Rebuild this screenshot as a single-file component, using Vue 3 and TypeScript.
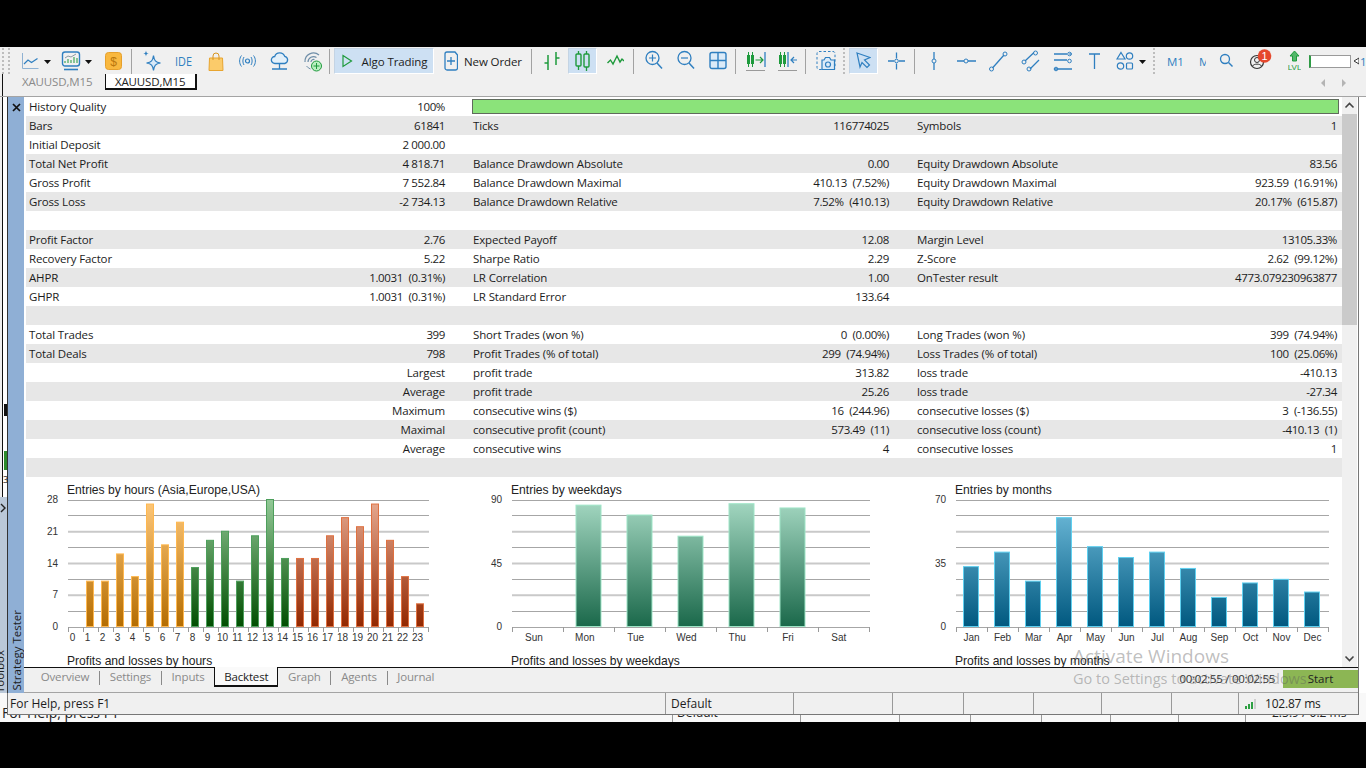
<template>
  <div class="screen">
    <div class="letterbox"></div>
    <div class="window">
      <!-- main toolbar -->
      <div class="toolbar">
        <template v-for="(t, i) in placedTools" :key="i">
          <span v-if="t.kind === 'sep'" class="sep" :style="{ marginLeft: t.gap + 'px' }"></span>
          <span v-else-if="t.kind === 'grip'" class="grip" :style="{ marginLeft: t.gap + 'px' }"></span>
          <span v-else-if="t.kind === 'text'" class="tool-text" :class="t.cls" :style="{ marginLeft: t.gap + 'px', width: t.w + 'px' }">{{ t.label }}</span>
          <span v-else-if="t.kind === 'active'" class="active-btn" :style="{ marginLeft: t.gap + 'px', width: t.w + 'px' }">
            <svg :width="t.iw" height="22" :viewBox="`0 0 ${t.iw} 22`" fill="none" v-html="t.body"></svg>
            <span v-if="t.label" class="active-label">{{ t.label }}</span>
          </span>
          <svg
            v-else
            class="tool-icon"
            :style="{ marginLeft: t.gap + 'px' }"
            :width="t.w"
            height="24"
            :viewBox="`0 0 ${t.w} 24`"
            fill="none"
            v-html="t.body"
          ></svg>
        </template>
      </div>

      <!-- chart tabs -->
      <div class="chart-tabs">
        <span class="tab-edge"></span>
        <span class="chart-tab">XAUUSD,M15</span>
        <span class="chart-tab current">XAUUSD,M15</span>
        <span class="tab-arrows"><i class="arr-left"></i><i class="arr-right"></i></span>
      </div>

      <div class="work">
        <div class="sliver">
          <div class="sliver-top">
            <i class="blob-dark"></i>
            <i class="blob-green"></i>
            <span class="sliver-num">3</span>
          </div>
          <div class="sliver-bottom">
            <svg width="7" height="10" viewBox="0 0 7 10" fill="none"><path d="M1 1l4 4-4 4" stroke="#222" stroke-width="1.4" /></svg>
            <span class="toolbox">Toolbox</span>
          </div>
        </div>

        <div class="strip">
          <svg class="close" width="9" height="9" viewBox="0 0 9 9"><path d="M1 1l7 7M8 1L1 8" stroke="#111" stroke-width="1.7" /></svg>
          <span class="strip-title">Strategy Tester</span>
        </div>

        <div class="center">
          <div class="report-wrap">
            <div class="report">
              <div class="row">
                <div class="cell"><span>History Quality</span><span class="num">100%</span></div>
                <div class="quality"></div>
              </div>
              <div v-for="(r, i) in rows" :key="i" class="row" :class="{ shade: i % 2 === 0 }">
                <div class="cell"><span>{{ r[0] }}</span><span :class="valueClass(r[1])">{{ r[1] }}</span></div>
                <div class="cell"><span>{{ r[2] }}</span><span :class="valueClass(r[3])">{{ r[3] }}</span></div>
                <div class="cell"><span>{{ r[4] }}</span><span :class="valueClass(r[5])">{{ r[5] }}</span></div>
              </div>
              <div class="charts">
                <svg v-for="c in charts" :key="c.id" width="444" height="190" viewBox="0 0 444 190" class="chart">
                  <defs>
                    <linearGradient v-for="g in c.grads" :id="g.id" :key="g.id" gradientUnits="userSpaceOnUse" x1="0" y1="22" x2="0" y2="150">
                      <stop offset="0" :stop-color="g.top" />
                      <stop offset="1" :stop-color="g.bottom" />
                    </linearGradient>
                  </defs>
                  <text x="42" y="17" class="title">{{ c.title }}</text>
                  <line
                    v-for="(g, k) in gridLines"
                    :key="k"
                    x1="43"
                    :x2="c.right"
                    :y1="g.y"
                    :y2="g.y"
                    :stroke="g.color"
                    :stroke-width="g.width"
                  />
                  <text v-for="(v, k) in c.axis" :key="k" x="33" :y="v.y" text-anchor="end" class="tick">{{ v.label }}</text>
                  <line v-for="(x, k) in c.ticks" :key="k" :x1="x" :x2="x" y1="150" y2="155" stroke="#9a9a9a" />
                  <rect
                    v-for="(b, k) in c.bars"
                    :key="k"
                    :x="b.x + 0.5"
                    :y="b.y"
                    :width="c.barW - 1"
                    :height="b.h"
                    :fill="`url(#${b.grad})`"
                    :stroke="b.stroke"
                  />
                  <text v-for="(l, k) in c.labels" :key="k" :x="l.x" y="164" text-anchor="middle" class="tick">{{ l.text }}</text>
                  <text x="42" y="188" class="title">{{ c.sub }}</text>
                </svg>
              </div>
            </div>
            <div class="scrollbar">
              <div class="sb-btn"><svg width="11" height="7" viewBox="0 0 11 7" fill="none"><path d="M1.5 5.5l4-4 4 4" stroke="#444" stroke-width="1.6" /></svg></div>
              <div class="sb-thumb"></div>
              <div class="sb-rest"></div>
              <div class="sb-btn"><svg width="11" height="7" viewBox="0 0 11 7" fill="none"><path d="M1.5 1.5l4 4 4-4" stroke="#444" stroke-width="1.6" /></svg></div>
            </div>
          </div>

          <div class="tester-tabs">
            <span class="ttab">Overview</span><i class="tdiv"></i>
            <span class="ttab">Settings</span><i class="tdiv"></i>
            <span class="ttab">Inputs</span>
            <span class="ttab current">Backtest</span>
            <span class="ttab">Graph</span><i class="tdiv"></i>
            <span class="ttab">Agents</span><i class="tdiv"></i>
            <span class="ttab">Journal</span>
            <span class="timer">00:02:55 / 00:02:55</span>
            <button class="start">Start</button>
          </div>
        </div>

        <div class="edge"></div>
      </div>

      <div class="foot">
        <div class="ghost">
          <span class="ghost-help">For Help, press F1</span>
          <span class="ghost-default">Default</span>
          <span class="ghost-ping">2.5.9 / 0.2 ms</span>
          <i v-for="x in ghostDividers" :key="x" class="ghost-div" :style="{ left: x + 'px' }"></i>
        </div>
        <div class="status">
          <span class="st help">For Help, press F1</span>
          <span class="st w128">Default</span>
          <span class="st w99"></span>
          <span class="st w71"></span>
          <span class="st w70"></span>
          <span class="st w68"></span>
          <span class="st w70"></span>
          <span class="st w67"></span>
          <span class="st ping">
            <svg width="13" height="11" viewBox="0 0 13 11"><path d="M1 8h2v3H1zM4 6h2v5H4zM7 4h2v7H7z" fill="#2ea043" /><path d="M10 1h2v10h-2z" fill="#cfcfcf" /></svg>
            102.87 ms
          </span>
        </div>
      </div>
    </div>
    <div class="letterbox low"></div>

    <div class="watermark">
      <div class="wm-big">Activate Windows</div>
      <div class="wm-small">Go to Settings to activate Windows.</div>
    </div>
  </div>
</template>

<script setup lang="ts">
interface Tool {
  x: number
  w: number
  kind?: 'sep' | 'grip' | 'text' | 'active'
  body?: string
  label?: string
  cls?: string
  iw?: number
}

const B = '#2f7fc0'
const G = '#1e9a3c'
const DROP = `<path d="M0 11h7l-3.500 4z" fill="#111"/>`

const sep = (x: number): Tool => ({ x, w: 1, kind: 'sep' })

const tools: Tool[] = [
  { x: 2, w: 2, kind: 'grip' },
  { x: 8, w: 2, kind: 'grip' },
  { x: 21, w: 18, body: `<path d="M1.500 4v15.500h16" stroke="#8fb2d3"/><path d="M3 15l4-4 3.500 2.500 6-4" stroke="${B}" stroke-width="1.2"/>` },
  { x: 44, w: 7, body: DROP },
  { x: 61, w: 20, body: `<rect x="1.500" y="3" width="17" height="14" rx="2.500" stroke="${B}" stroke-width="1.4"/><path d="M4 14v-2M7 14v-4M10 14v-3M13 14V8M16 14V9" stroke="${G}"/><path d="M4 9l3-2 3 1 5-3" stroke="#8a9aa5"/><path d="M3 20.500h14" stroke="${B}" stroke-width="1.6"/>` },
  { x: 85, w: 7, body: DROP },
  { x: 105, w: 17, body: `<rect x=".5" y="3.500" width="16" height="17" rx="3" fill="#f9b83f" stroke="#e6a02c"/><text x="8.500" y="16.500" text-anchor="middle" font-family="Liberation Sans, sans-serif" font-size="12" fill="#b9770e">$</text>` },
  sep(131),
  { x: 142, w: 19, body: `<path d="M11.500 6.500c.7 5 2 6.800 7 7.500-5 .7-6.300 2.500-7 7.500-.7-5-2-6.800-7-7.500 5-.7 6.300-2.500 7-7.500z" fill="#d8e9f8" stroke="${B}" stroke-width="1.2"/><path d="M4 1.500c.3 2 .8 2.700 2.800 3-2 .3-2.500 1-2.800 3-.3-2-.8-2.700-2.800-3 2-.3 2.500-1 2.800-3z" fill="${B}"/>` },
  { x: 175, w: 18, body: `<text x="0" y="17" font-family="Open Sans, sans-serif" font-size="12" fill="${B}" textLength="17" lengthAdjust="spacingAndGlyphs">IDE</text>` },
  { x: 208, w: 16, body: `<path d="M1.500 9h13l.5 12.500H1z" fill="#fbcb6a" stroke="#e8a530"/><path d="M5 11V7a3 3 0 0 1 6 0v4" stroke="#d8951f"/>` },
  { x: 239, w: 17, body: `<circle cx="8.500" cy="12" r="2" stroke="${B}" stroke-width="1.2"/><path d="M5 8c-1.500 2-1.500 6 0 8M12 8c1.500 2 1.500 6 0 8M2.500 6.500c-2.500 3-2.500 8 0 11M14.500 6.500c2.500 3 2.500 8 0 11" stroke="${B}"/>` },
  { x: 270, w: 19, body: `<path d="M5 14.500a3.500 3.500 0 0 1-.3-7 5.300 5.300 0 0 1 10-.2 3.700 3.700 0 0 1 .1 7.200z" fill="#e3f0fa" stroke="${B}" stroke-width="1.3"/><path d="M9.500 14.500v5M2 20h15" stroke="${B}" stroke-width="1.3"/>` },
  { x: 303, w: 19, body: `<path d="M2 13a8.500 8.500 0 0 1 14-7M5 13a5.500 5.500 0 0 1 8.500-4.500M8 13a2.700 2.700 0 0 1 3.500-2.500" stroke="#6f8ea8" stroke-width="1.2"/><path d="M3.500 17a9 9 0 0 0 4 3" stroke="#6f8ea8"/><circle cx="13.500" cy="17" r="5" fill="#b8efc0" stroke="${G}"/><path d="M13.500 14v6M10.500 17h6" stroke="${G}"/>` },
  sep(329),
  { x: 334, w: 100, kind: 'active', label: 'Algo Trading', iw: 12, body: `<path d="M2 5.500l8.500 5.500L2 16.500z" stroke="${G}" stroke-width="1.2"/>` },
  { x: 444, w: 14, body: `<path d="M3 3h8l2.500 3v13a2 2 0 0 1-2 2H3a2 2 0 0 1-2-2V5a2 2 0 0 1 2-2z" stroke="${B}" stroke-width="1.3"/><path d="M7 8v8M3 12h8" stroke="${B}" stroke-width="1.3"/>` },
  { x: 464, w: 60, kind: 'text', label: 'New Order' },
  sep(531),
  { x: 543, w: 17, body: `<path d="M5 6v15M1.500 14H5M13 3v13M13 9h3.500" stroke="${G}" stroke-width="1.5"/>` },
  { x: 568, w: 29, kind: 'active', iw: 15, body: `<path d="M3.500 1v3M3.500 16v4M11.500 1v3M11.500 17v4" stroke="${G}" stroke-width="1.3"/><rect x="1" y="4" width="5" height="12" rx="1" stroke="${G}" stroke-width="1.4"/><rect x="9" y="4" width="5" height="13" rx="1" stroke="${G}" stroke-width="1.4"/>` },
  { x: 607, w: 17, body: `<path d="M.5 14l3-3 2.500 4 4-8 3 6 2-3 2 2" stroke="${G}" stroke-width="1.4"/>` },
  sep(633),
  { x: 645, w: 18, body: `<circle cx="7.500" cy="9" r="6.500" stroke="${B}" stroke-width="1.3"/><path d="M12 14l5 5.500" stroke="${B}" stroke-width="1.5"/><path d="M7.500 5.500v7M4 9h7" stroke="${B}" stroke-width="1.2"/>` },
  { x: 677, w: 18, body: `<circle cx="7.500" cy="9" r="6.500" stroke="${B}" stroke-width="1.3"/><path d="M12 14l5 5.500" stroke="${B}" stroke-width="1.5"/><path d="M4 9h7" stroke="${B}" stroke-width="1.2"/>` },
  { x: 709, w: 18, body: `<rect x="1" y="3.500" width="16" height="16" rx="2" fill="#dcebf8" stroke="${B}" stroke-width="1.4"/><path d="M9 3.500v16M1 11.500h16" stroke="${B}" stroke-width="1.4"/>` },
  sep(735),
  { x: 746, w: 20, body: `<path d="M2.500 3v15M6.500 3v15" stroke="${G}"/><rect x="1" y="6" width="3" height="9" fill="${G}"/><rect x="5" y="6" width="3" height="9" fill="${G}"/><path d="M9.500 11h7M14 8l3 3-3 3" stroke="${G}" stroke-width="1.2"/><path d="M19 3v15" stroke="${B}" stroke-width="1.3"/><path d="M0 21.500h19" stroke="#9a9a9a"/>` },
  { x: 778, w: 20, body: `<path d="M2.500 3v15M6.500 3v15" stroke="${G}"/><rect x="1" y="6" width="3" height="9" fill="${G}"/><rect x="5" y="6" width="3" height="9" fill="${G}"/><path d="M10 3v15" stroke="${B}" stroke-width="1.3"/><path d="M19 11h-6M16 8l-3 3 3 3" stroke="${B}" stroke-width="1.2"/><path d="M0 21.500h19" stroke="#9a9a9a"/>` },
  sep(805),
  { x: 816, w: 20, body: `<rect x="1" y="2.500" width="18" height="18" rx="2" stroke="${B}" stroke-dasharray="2.500 2"/><path d="M6 11h2l1.500-2.500h4L15 11h3.500v9.500H6z" fill="#dcebf8" stroke="${B}" stroke-width="1.2"/><circle cx="12" cy="15.500" r="2.500" stroke="${B}" stroke-width="1.2"/>` },
  { x: 843, w: 2, kind: 'grip' },
  { x: 849, w: 29, kind: 'active', iw: 15, body: `<path d="M1 3l13 4.500-5.500 2.500 5 5-2.500 2.500-5-5L4 17z" stroke="${B}" stroke-width="1.2"/>` },
  { x: 888, w: 17, body: `<path d="M8.500 3.500v6M8.500 14.500v6M0 12h6M11 12h6" stroke="${B}" stroke-width="1.3"/><circle cx="8.500" cy="12" r="1.800" stroke="${B}"/>` },
  sep(914),
  { x: 929, w: 10, body: `<path d="M5 3v7M5 14v7" stroke="${B}" stroke-width="1.3"/><circle cx="5" cy="12" r="2" stroke="${B}"/>` },
  { x: 957, w: 19, body: `<path d="M0 12h7M11 12h8" stroke="${B}" stroke-width="1.3"/><circle cx="9" cy="12" r="2" stroke="${B}"/>` },
  { x: 988, w: 20, body: `<path d="M4.500 19L16 6" stroke="${B}" stroke-width="1.3"/><circle cx="3.500" cy="20" r="2" stroke="${B}"/><circle cx="17" cy="5" r="2" stroke="${B}"/>` },
  { x: 1021, w: 20, body: `<path d="M4 12l9-8.500M9 20l9-9" stroke="${B}" stroke-width="1.3"/><circle cx="3" cy="13" r="2" stroke="${B}"/><circle cx="14.500" cy="4" r="2" stroke="${B}"/><circle cx="8" cy="20" r="2" stroke="${B}"/>` },
  { x: 1053, w: 20, body: `<path d="M1 5h13M1 11h13M1 20h18" stroke="${B}" stroke-width="1.3"/><path d="M16 5h3" stroke="${B}"/><circle cx="16.500" cy="5" r="1.800" stroke="${B}"/><circle cx="16.500" cy="12" r="1.800" stroke="${B}"/><circle cx="3" cy="20" r="1.800" stroke="${B}"/>` },
  { x: 1088, w: 13, body: `<path d="M1 5h11M6.500 5v15" stroke="${B}" stroke-width="1.3"/>` },
  { x: 1116, w: 18, body: `<path d="M5 3.500l4 6.500H1z" stroke="${B}" stroke-width="1.2"/><circle cx="13.500" cy="7" r="3.200" stroke="${B}" stroke-width="1.2"/><circle cx="4.500" cy="17" r="3.200" stroke="${B}" stroke-width="1.2"/><rect x="10.500" y="14" width="6" height="6" rx="1" stroke="${B}" stroke-width="1.2"/>` },
  { x: 1139, w: 7, body: DROP },
  { x: 1153, w: 2, kind: 'grip' },
  { x: 1167, w: 20, kind: 'text', label: 'M1', cls: 'blue' },
  { x: 1199, w: 7, kind: 'text', label: 'M', cls: 'blue clip' },
  { x: 1219, w: 14, body: `<circle cx="6" cy="10" r="4.500" stroke="${B}" stroke-width="1.3"/><path d="M9.500 13.500l4 4" stroke="${B}" stroke-width="1.4"/>` },
  { x: 1249, w: 23, body: `<circle cx="8" cy="13" r="6.500" stroke="#333" stroke-width="1.2"/><circle cx="8" cy="11" r="2.500" stroke="#333"/><path d="M3.500 17c1.500-2.500 7.500-2.500 9 0" stroke="#333"/><circle cx="15.500" cy="7" r="6.800" fill="#e5482d"/><text x="15.500" y="11" text-anchor="middle" font-family="Liberation Sans, sans-serif" font-size="11" fill="#fff">1</text>` },
  { x: 1288, w: 13, body: `<path d="M6.500 2L11 7H8.500v5h-4V7H2z" fill="#53b76a" stroke="${G}"/><text x="6.500" y="21" text-anchor="middle" font-family="Liberation Sans, sans-serif" font-size="8" fill="${G}">LVL</text>` },
  { x: 1309, w: 42, kind: 'text', label: '', cls: 'vol' },
  { x: 1354, w: 5, body: `<path d="M5 9L0 12l5 3z" fill="#fff" stroke="#333"/>` },
  { x: 1360, w: 6, kind: 'text', label: '1', cls: 'blue' },
]

// turn the x positions into gaps for the flex row
let edge = 0
const placedTools = tools.map((t) => {
  const gap = t.x - edge
  edge = t.x + t.w
  return { ...t, gap }
})

// digits are narrower in the reference, and bracketed values have a wider space
const valueClass = (v: string) => ({ num: /^-?\d/.test(v), paren: v.includes('(') })

const ghostDividers = [670, 798, 897, 968, 1039, 1108, 1176, 1243]

const rows: string[][] = [
  ['Bars', '61841', 'Ticks', '116774025', 'Symbols', '1'],
  ['Initial Deposit', '2 000.00', '', '', '', ''],
  ['Total Net Profit', '4 818.71', 'Balance Drawdown Absolute', '0.00', 'Equity Drawdown Absolute', '83.56'],
  ['Gross Profit', '7 552.84', 'Balance Drawdown Maximal', '410.13 (7.52%)', 'Equity Drawdown Maximal', '923.59 (16.91%)'],
  ['Gross Loss', '-2 734.13', 'Balance Drawdown Relative', '7.52% (410.13)', 'Equity Drawdown Relative', '20.17% (615.87)'],
  ['', '', '', '', '', ''],
  ['Profit Factor', '2.76', 'Expected Payoff', '12.08', 'Margin Level', '13105.33%'],
  ['Recovery Factor', '5.22', 'Sharpe Ratio', '2.29', 'Z-Score', '2.62 (99.12%)'],
  ['AHPR', '1.0031 (0.31%)', 'LR Correlation', '1.00', 'OnTester result', '4773.079230963877'],
  ['GHPR', '1.0031 (0.31%)', 'LR Standard Error', '133.64', '', ''],
  ['', '', '', '', '', ''],
  ['Total Trades', '399', 'Short Trades (won %)', '0 (0.00%)', 'Long Trades (won %)', '399 (74.94%)'],
  ['Total Deals', '798', 'Profit Trades (% of total)', '299 (74.94%)', 'Loss Trades (% of total)', '100 (25.06%)'],
  ['', 'Largest', 'profit trade', '313.82', 'loss trade', '-410.13'],
  ['', 'Average', 'profit trade', '25.26', 'loss trade', '-27.34'],
  ['', 'Maximum', 'consecutive wins ($)', '16 (244.96)', 'consecutive losses ($)', '3 (-136.55)'],
  ['', 'Maximal', 'consecutive profit (count)', '573.49 (11)', 'consecutive loss (count)', '-410.13 (1)'],
  ['', 'Average', 'consecutive wins', '4', 'consecutive losses', '1'],
  ['', '', '', '', '', ''],
]

const TOP = 22.5
const BASE = 149.5
const STEP = (BASE - TOP) / 8

const gridLines = Array.from({ length: 9 }, (_, i) => {
  const edgeLine = i === 0 || i === 8
  const light = !edgeLine && i % 2 === 0
  return {
    y: light ? TOP + i * STEP + 0.5 : Math.round(TOP + i * STEP) + 0.5,
    color: light ? '#c9c9c9' : '#a6a6a6',
    width: light ? 2 : 1,
  }
})

interface Grad {
  id: string
  top: string
  bottom: string
  stroke: string
}

function makeChart(opts: {
  id: string
  title: string
  sub: string
  max: number
  parts: number
  right: number
  slot: number
  barOff: number
  barW: number
  labelStart: number
  labelStep: number
  names: string[]
  values: number[]
  grads: Grad[]
  gradOf: (i: number) => number
}) {
  const axis = Array.from({ length: opts.parts + 1 }, (_, i) => ({
    y: TOP + (i * (BASE - TOP)) / opts.parts + 3.5,
    label: String(Math.round((opts.max * (opts.parts - i)) / opts.parts)),
  }))
  const ticks = opts.names.map((_, i) => 43.5 + i * opts.slot)
  ticks.push(43.5 + opts.names.length * opts.slot)
  const bars = opts.values
    .map((v, i) => {
      const h = ((BASE - TOP) * v) / opts.max
      const g = opts.grads[opts.gradOf(i)]
      return { x: 43 + opts.barOff + i * opts.slot, y: BASE - h, h, grad: g.id, stroke: g.stroke, v }
    })
    .filter((b) => b.v > 0)
  const labels = opts.names.map((text, i) => ({ text, x: opts.labelStart + i * opts.labelStep }))
  return { ...opts, axis, ticks, bars, labels }
}

const charts = [
  makeChart({
    id: 'hours',
    title: 'Entries by hours (Asia,Europe,USA)',
    sub: 'Profits and losses by hours',
    max: 28,
    parts: 4,
    right: 404,
    slot: 15,
    barOff: 3,
    barW: 8,
    labelStart: 47.5,
    labelStep: 15,
    names: Array.from({ length: 24 }, (_, i) => String(i)),
    values: [0, 10, 10, 16, 11, 27, 18, 23, 13, 19, 21, 10, 20, 28, 15, 15, 15, 20, 24, 22, 27, 19, 11, 5],
    grads: [
      { id: 'g-asia', top: '#ffc97c', bottom: '#b46c00', stroke: '#ffb84f' },
      { id: 'g-europe', top: '#93c997', bottom: '#004d00', stroke: '#4d9f5c' },
      { id: 'g-usa', top: '#e8ab92', bottom: '#912700', stroke: '#df7040' },
    ],
    gradOf: (i) => (i < 8 ? 0 : i < 15 ? 1 : 2),
  }),
  makeChart({
    id: 'weekdays',
    title: 'Entries by weekdays',
    sub: 'Profits and losses by weekdays',
    max: 90,
    parts: 2,
    right: 401,
    slot: 51,
    barOff: 12.5,
    barW: 26,
    labelStart: 65,
    labelStep: 50.8,
    names: ['Sun', 'Mon', 'Tue', 'Wed', 'Thu', 'Fri', 'Sat'],
    values: [0, 86, 79, 64, 87, 84, 0],
    grads: [{ id: 'g-week', top: '#a6d9c3', bottom: '#1a684a', stroke: '#9fe6c8' }],
    gradOf: () => 0,
  }),
  makeChart({
    id: 'months',
    title: 'Entries by months',
    sub: 'Profits and losses by months',
    max: 70,
    parts: 2,
    right: 416,
    slot: 31,
    barOff: 7,
    barW: 16,
    labelStart: 58.5,
    labelStep: 31,
    names: ['Jan', 'Feb', 'Mar', 'Apr', 'May', 'Jun', 'Jul', 'Aug', 'Sep', 'Oct', 'Nov', 'Dec'],
    values: [33, 41, 25, 60, 44, 38, 41, 32, 16, 24, 26, 19],
    grads: [{ id: 'g-month', top: '#74c0df', bottom: '#00587f', stroke: '#5fd0f0' }],
    gradOf: () => 0,
  }),
]
</script>

<style>
html,
body {
  margin: 0;
  background: #000;
}
</style>

<style scoped>
.screen {
  position: relative;
  display: flex;
  flex-direction: column;
  width: 1366px;
  height: 768px;
  overflow: hidden;
  background: #000;
  font-family: 'Open Sans', sans-serif;
  font-size: 11.5px;
  color: #1c1c1c;
}
.letterbox {
  flex: none;
  height: 47px;
  background: #000;
}
.letterbox.low {
  height: 46px;
}
.window {
  flex: none;
  display: flex;
  flex-direction: column;
  height: 675px;
  background: #f0f0f0;
}

/* toolbar */
.toolbar {
  flex: none;
  display: flex;
  align-items: center;
  box-sizing: border-box;
  height: 27px;
  padding-top: 1px;
  white-space: nowrap;
  overflow: hidden;
}
.tool-icon,
.sep,
.grip,
.tool-text,
.active-btn {
  flex: none;
}
.sep {
  width: 1px;
  height: 25px;
  background: #a2a2a2;
}
.grip {
  width: 2px;
  height: 26px;
  background: repeating-linear-gradient(to bottom, #bdbdbd 0 2px, transparent 2px 4px);
}
.tool-text {
  font-size: 11.5px;
  letter-spacing: -0.1px;
  overflow: hidden;
}
.tool-text.blue {
  color: #2f7fc0;
}
.tool-text.vol {
  height: 13px;
  background: #fff;
  border: 1px solid #9a9a9a;
  border-left: 2px solid #2e9b45;
  box-sizing: border-box;
}
.active-btn {
  display: flex;
  align-items: center;
  justify-content: center;
  gap: 9px;
  box-sizing: border-box;
  height: 26px;
  background: #cde0f3;
  border: 1px solid #c4d4e4;
  border-right-color: #fff;
  border-bottom-color: #fff;
}
.active-label {
  font-size: 11.5px;
  letter-spacing: -0.1px;
}

/* chart tabs */
.chart-tabs {
  flex: none;
  display: flex;
  align-items: flex-start;
  height: 22px;
  position: relative;
}
.tab-edge {
  width: 1px;
  height: 22px;
  margin-left: 2px;
  background: #111;
}
.chart-tab {
  width: 70px;
  height: 16px;
  margin-left: 19px;
  line-height: 15px;
  letter-spacing: -0.15px;
  color: #8a8a8a;
}
.chart-tab.current {
  box-sizing: border-box;
  width: 92px;
  margin-left: 13px;
  padding-left: 9px;
  color: #222;
  background: #fff;
  border: 1px solid #111;
  border-top: 0;
  border-bottom-width: 2px;
  border-right-width: 2px;
}
.tab-arrows {
  display: flex;
  gap: 17px;
  margin-left: auto;
  margin-right: 20px;
  padding-top: 5px;
}
.arr-left,
.arr-right {
  width: 0;
  height: 0;
  border-top: 4px solid transparent;
  border-bottom: 4px solid transparent;
}
.arr-left {
  border-right: 4px solid #b4b4b4;
}
.arr-right {
  border-left: 4px solid #b4b4b4;
}

/* main work area */
.work {
  flex: none;
  display: flex;
  height: 597px;
  border-top: 1px solid #a4a4a4;
  box-sizing: border-box;
}
.sliver {
  flex: none;
  display: flex;
  flex-direction: column;
  width: 8px;
}
.sliver-top {
  position: relative;
  flex: none;
  box-sizing: border-box;
  height: 400px;
  margin-left: 2px;
  background: #fff;
  border-left: 1px solid #111;
  border-right: 1px solid #333;
}
.blob-dark,
.blob-green {
  position: absolute;
  left: 1px;
  width: 3px;
}
.blob-dark {
  top: 307px;
  height: 12px;
  background: #111;
}
.blob-green {
  top: 354px;
  height: 19px;
  background: #2c8a2c;
}
.sliver-num {
  position: absolute;
  top: 376px;
  left: 0;
  font-size: 9px;
}
.sliver-bottom {
  flex: 1;
  display: flex;
  flex-direction: column;
  justify-content: space-between;
  padding-top: 6px;
  background: #bac8d8;
  border-right: 1px solid #333;
  overflow: hidden;
}
.toolbox {
  writing-mode: vertical-rl;
  transform: rotate(180deg);
  margin: 0 0 0 -8px;
  font-size: 11.5px;
}
.strip {
  flex: none;
  display: flex;
  flex-direction: column;
  align-items: center;
  justify-content: space-between;
  box-sizing: border-box;
  width: 16px;
  padding: 6px 0 2px;
  background: #8fafd5;
}
.strip-title {
  writing-mode: vertical-rl;
  transform: rotate(180deg);
  font-size: 11.5px;
}
.center {
  flex: none;
  display: flex;
  flex-direction: column;
  box-sizing: border-box;
  width: 1335px;
  border-right: 1px solid #777;
}
.report-wrap {
  flex: none;
  display: flex;
  height: 570px;
  padding-left: 2px;
  background: #fff;
  overflow: hidden;
}
.report {
  flex: none;
  width: 1316px;
}
.row {
  display: grid;
  grid-template-columns: 416px 416px 420px;
  column-gap: 28px;
  align-items: center;
  height: 19px;
  padding-left: 3px;
  line-height: 19px;
  letter-spacing: -0.15px;
  white-space: nowrap;
}
.row.shade {
  background: #e7e7e7;
}
.cell {
  display: flex;
  justify-content: space-between;
}
.num {
  letter-spacing: -0.37px;
}
.paren {
  word-spacing: 3px;
}
.quality {
  grid-column: 2 / -1;
  box-sizing: border-box;
  height: 15px;
  margin: 0 -2px 0 -1px;
  background: #8be37a;
  border: 1px solid #5f6b5c;
}
.charts {
  display: flex;
  margin-left: -1px;
}
.chart {
  flex: none;
  display: block;
}
.title {
  font-family: 'Liberation Sans', sans-serif;
  font-size: 12.1px;
  fill: #222;
}
.tick {
  font-family: 'Liberation Sans', sans-serif;
  font-size: 10px;
  fill: #333;
}
.scrollbar {
  flex: none;
  display: flex;
  flex-direction: column;
  width: 15px;
  background: #f0f0f0;
}
.sb-btn {
  flex: none;
  display: flex;
  align-items: center;
  justify-content: center;
  height: 17px;
}
.sb-thumb {
  flex: none;
  height: 211px;
  background: #cacaca;
}
.sb-rest {
  flex: 1;
}
.tester-tabs {
  flex: 1;
  display: flex;
  align-items: flex-start;
  padding-left: 2px;
  border-top: 1px solid #111;
  color: #8a8a8a;
  background: #f0f0f0;
  border-bottom: 1px solid #a4a4a4;
  font-size: 11.5px;
  letter-spacing: -0.15px;
}
.ttab {
  padding: 0 9.7px;
  line-height: 18px;
}
.ttab:first-child {
  margin-left: 5px;
}
.ttab.current {
  box-sizing: border-box;
  width: 64px;
  height: 20px;
  margin-top: -1px;
  padding: 1px 0 0;
  line-height: 18px;
  text-align: center;
  color: #222;
  background: #fafafa;
  border: 1px solid #111;
  border-top: 0;
  border-bottom-width: 2px;
}
.tdiv {
  width: 1px;
  height: 14px;
  margin-top: 3px;
  background: #8a8a8a;
}
.timer {
  margin-left: auto;
  margin-right: 8px;
  line-height: 21px;
  letter-spacing: -0.3px;
  color: #333;
}
.start {
  width: 75px;
  height: 18px;
  margin-top: 2px;
  padding: 0 0 1px;
  border: 0;
  background: #8cb654;
  color: #222;
  font: inherit;
}
.edge {
  flex: 1;
  background: #fff;
}

/* status bar */
.foot {
  position: relative;
  flex: none;
  height: 29px;
  background: #f8f8f8;
  overflow: hidden;
}
.ghost {
  position: absolute;
  left: 2px;
  right: 0;
  top: 11px;
  height: 18px;
  font-size: 14px;
  line-height: 18px;
  color: #222;
}
.ghost-default {
  position: absolute;
  left: 675px;
  font-size: 12px;
}
.ghost-ping {
  position: absolute;
  left: 1270px;
  font-size: 12px;
}
.ghost-div {
  position: absolute;
  top: 10px;
  width: 1px;
  height: 8px;
  background: #999;
}
.status {
  position: relative;
  display: flex;
  box-sizing: border-box;
  width: 1352px;
  height: 22px;
  margin-left: 7px;
  line-height: 21px;
  background: #f0f0f0;
  border-left: 1px solid #777;
  border-right: 1px solid #777;
  border-bottom: 1px solid #777;
  font-size: 12px;
}
.st {
  flex: none;
  box-sizing: border-box;
  padding-left: 5px;
  border-right: 1px solid #999;
}
.st.help {
  width: 658px;
  padding-left: 2px;
  font-size: 12px;
}
.w128 {
  width: 128px;
}
.w99 {
  width: 99px;
}
.w71 {
  width: 71px;
}
.w70 {
  width: 70px;
}
.w68 {
  width: 68px;
}
.w67 {
  width: 67px;
}
.st.ping {
  flex: 1;
  display: flex;
  align-items: center;
  gap: 8px;
  border-right: 0;
  letter-spacing: -0.2px;
}
.watermark {
  position: absolute;
  left: 1073px;
  top: 643px;
  color: rgba(90, 90, 90, 0.4);
  white-space: nowrap;
  pointer-events: none;
}
.wm-big {
  font-size: 19px;
  line-height: 26px;
}
.wm-small {
  font-size: 14.5px;
  line-height: 20px;
}
</style>
